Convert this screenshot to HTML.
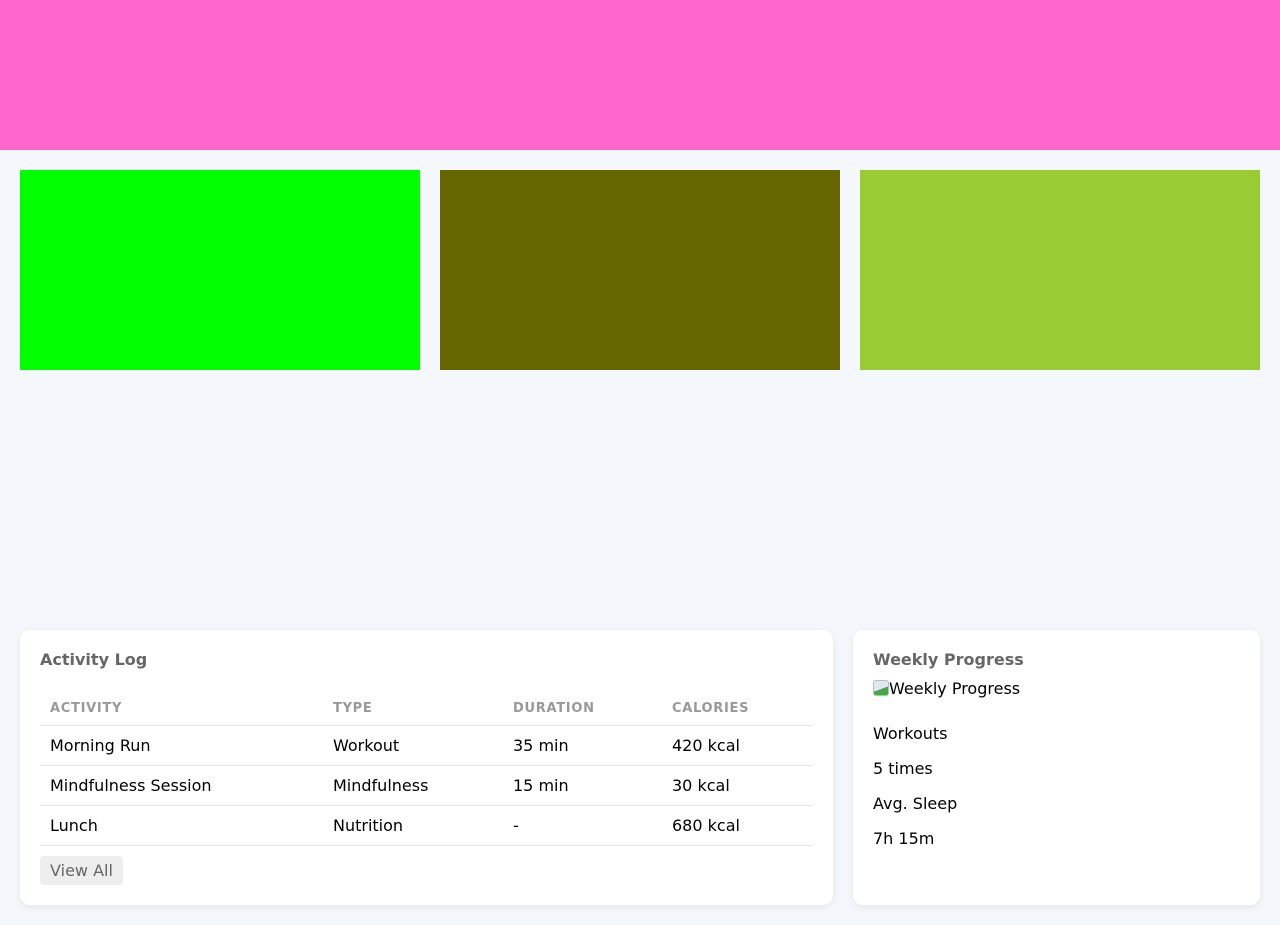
<!DOCTYPE html>
<html><head><meta charset="utf-8"><style>
*{box-sizing:border-box;margin:0;padding:0}
body{width:1280px;height:925px;background:#f4f7fb;font-family:"DejaVu Sans",sans-serif;font-size:16px;color:#000;position:relative;overflow:hidden}
.a{position:absolute}
.card{position:absolute;background:#fff;border-radius:10px;box-shadow:0 2px 8px rgba(0,0,0,.08)}
.t{position:absolute;font-weight:bold;color:#666;font-size:16px;line-height:20px}
.th{position:absolute;top:0;font-size:13px;font-weight:bold;color:#999;line-height:34px;letter-spacing:0.7px}
.row{position:absolute;left:20px;width:773px;height:40px;border-top:1px solid #e6e6e6}
.row span{position:absolute;line-height:39px}
.p{position:absolute;left:20px;line-height:20px}
</style></head><body>
<div class="a" style="left:0;top:0;width:1280px;height:150px;background:#ff66cc"></div>
<div class="a" style="left:20px;top:170px;width:400px;height:200px;background:#00ff00"></div>
<div class="a" style="left:440px;top:170px;width:400px;height:200px;background:#666600"></div>
<div class="a" style="left:860px;top:170px;width:400px;height:200px;background:#99cc33"></div>

<div class="card" style="left:20px;top:630px;width:813px;height:275px">
<div class="t" style="left:20px;top:20px">Activity Log</div>
<div class="a" style="left:20px;top:62px;width:773px;height:33px">
<span class="th" style="left:10px">ACTIVITY</span><span class="th" style="left:293px">TYPE</span><span class="th" style="left:473px">DURATION</span><span class="th" style="left:632px">CALORIES</span></div>
<div class="row" style="top:95px"><span style="left:10px">Morning Run</span><span style="left:293px">Workout</span><span style="left:473px">35 min</span><span style="left:632px">420 kcal</span></div>
<div class="row" style="top:135px"><span style="left:10px">Mindfulness Session</span><span style="left:293px">Mindfulness</span><span style="left:473px">15 min</span><span style="left:632px">30 kcal</span></div>
<div class="row" style="top:175px;border-bottom:1px solid #e6e6e6;height:41px"><span style="left:10px">Lunch</span><span style="left:293px">Nutrition</span><span style="left:473px">-</span><span style="left:632px">680 kcal</span></div>
<div class="a" style="left:20px;top:226px;width:83px;height:29px;background:#eee;border-radius:4px;color:#666;line-height:29px;text-align:center">View All</div>
</div>

<div class="card" style="left:853px;top:630px;width:407px;height:275px">
<div class="t" style="left:20px;top:20px">Weekly Progress</div>
<div class="p" style="top:49px"><span style="display:inline-block;width:16px;height:16px;vertical-align:-2px;border:1px solid #bbb;border-radius:3px;background:linear-gradient(160deg,#dde8f5 55%,#4a4 56%)"></span>Weekly Progress</div>
<div class="p" style="top:94px">Workouts</div>
<div class="p" style="top:129px">5 times</div>
<div class="p" style="top:164px">Avg. Sleep</div>
<div class="p" style="top:199px">7h 15m</div>
</div>
</body></html>
